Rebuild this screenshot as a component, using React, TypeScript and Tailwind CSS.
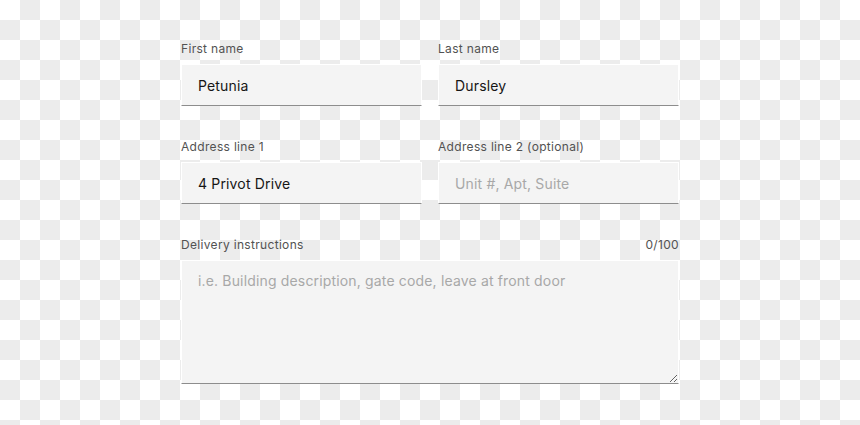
import React from "react";

const FONT = "font-['Inter','Noto_Sans',sans-serif]";

const Label = ({ children }: { children: React.ReactNode }) => (
  <label className="block text-xs leading-4 tracking-[0.32px] text-[#525252] mb-[7px]">
    {children}
  </label>
);

const TextField = ({
  label,
  value,
  placeholder,
}: {
  label: string;
  value?: string;
  placeholder?: string;
}) => (
  <div className="flex flex-col">
    <Label>{label}</Label>
    <input
      type="text"
      defaultValue={value}
      placeholder={placeholder}
      className="h-[42px] w-full border border-white border-b-[#8d8d8d] bg-[#f4f4f4] px-4 text-sm tracking-[0.16px] text-[#161616] placeholder:text-[#a8a8a8] outline-none"
    />
  </div>
);

export default function App() {
  return (
    <div
      className={`min-h-screen w-full bg-white bg-[conic-gradient(#ececec_0_25%,#fff_0_50%,#ececec_0_75%,#fff_0)] bg-size-[40px_40px] ${FONT}`}
    >
      <form className="w-[498px] mx-auto pt-[41px] flex flex-col gap-[33px]">
        <div className="grid grid-cols-2 gap-4">
          <TextField label="First name" value="Petunia" />
          <TextField label="Last name" value="Dursley" />
        </div>
        <div className="grid grid-cols-2 gap-4">
          <TextField label="Address line 1" value="4 Privot Drive" />
          <TextField label="Address line 2 (optional)" placeholder="Unit #, Apt, Suite" />
        </div>
        <div className="flex flex-col">
          <div className="flex justify-between">
            <Label>Delivery instructions</Label>
            <span className="text-xs leading-4 tracking-[0.32px] text-[#525252]">0/100</span>
          </div>
          <textarea
            placeholder="i.e. Building description, gate code, leave at front door"
            className="h-[124px] w-full border border-white border-b-[#8d8d8d] bg-[#f4f4f4] px-4 py-[10px] text-sm leading-5 tracking-[0.16px] text-[#161616] placeholder:text-[#a8a8a8] outline-none resize-y"
          />
        </div>
      </form>
    </div>
  );
}
